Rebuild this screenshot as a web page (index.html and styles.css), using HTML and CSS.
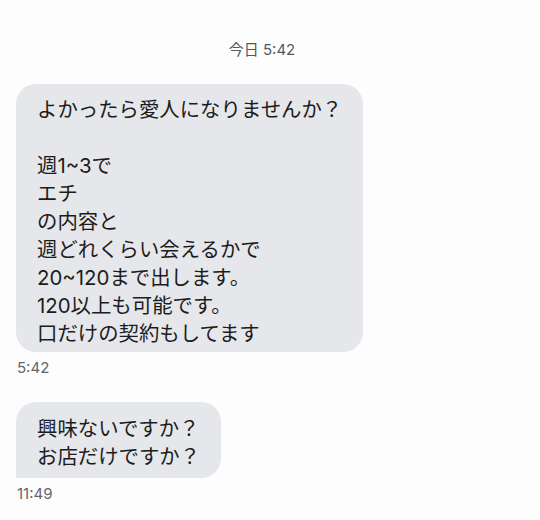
FILE: index.html
```html
<!DOCTYPE html>
<html lang="ja">
<head>
    <meta charset="UTF-8">
    <meta name="viewport" content="width=device-width, initial-scale=1.0">
    <title>メッセージ</title>
    <link rel="stylesheet" href="styles.css">
</head>
<body>
    <main class="thread">
        <div class="day-stamp">今日 5:42</div>

        <div class="message">
            <div class="bubble bubble-first">よかったら愛人になりませんか？<br><br>週1~3で<br>エチ<br>の内容と<br>週どれくらい会えるかで<br>20~120まで出します。<br>120以上も可能です。<br>口だけの契約もしてます</div>
            <div class="time">5:42</div>
        </div>

        <div class="message">
            <div class="bubble bubble-last">興味ないですか？<br>お店だけですか？</div>
            <div class="time">11:49</div>
        </div>
    </main>
</body>
</html>
```

FILE: styles.css
```css
* {
    box-sizing: border-box;
    margin: 0;
    padding: 0;
}

body {
    font-family: "Inter", "Noto Sans CJK JP", sans-serif;
    background-color: #fdfdfe;
    color: #1c1c1e;
    width: 540px;
    height: 520px;
    overflow: hidden;
}

.thread {
    display: flex;
    flex-direction: column;
    align-items: flex-start;
    padding: 40px 0 0 16px;
}

.day-stamp {
    align-self: stretch;
    text-align: center;
    padding-right: 32px;
    font-size: 15px;
    line-height: 20px;
    color: #55585d;
}

.message {
    display: flex;
    flex-direction: column;
    align-items: flex-start;
    margin-top: 24px;
}

.bubble {
    background-color: #e5e7ea;
    font-size: 20.4px;
    line-height: 28px;
    padding: 13px 21px 7px 21px;
    border-radius: 20px;
}

.bubble-first {
    padding: 12px 21px 4px 21px;
}

.bubble-last {
    border-bottom-left-radius: 0;
}

.time {
    margin-top: 6px;
    font-size: 15px;
    line-height: 20px;
    color: #62656a;
    padding-left: 1px;
}
```
